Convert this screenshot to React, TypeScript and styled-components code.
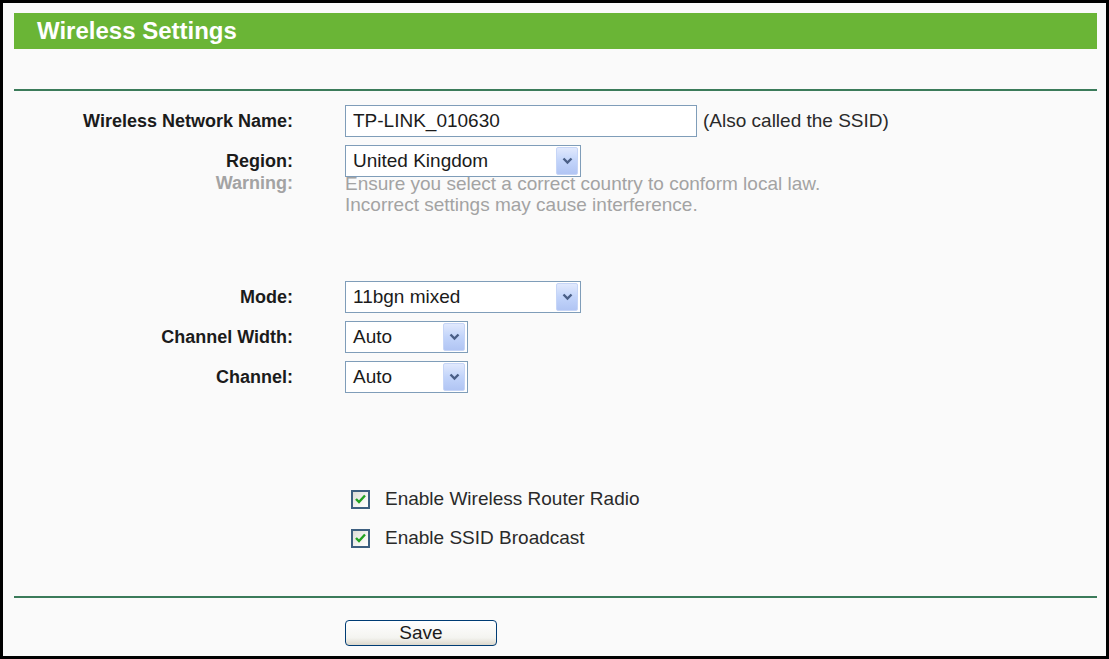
import React from "react";
import styled, { createGlobalStyle } from "styled-components";

const GlobalStyle = createGlobalStyle`
  html, body {
    margin: 0;
    padding: 0;
    background: #fafafa;
  }
  * {
    box-sizing: border-box;
  }
`;

const Frame = styled.div`
  width: 1109px;
  height: 659px;
  border: 3px solid #000;
  background: #fafafa;
  padding: 10px 9px 0 11px;
  font-family: "Liberation Sans", Arial, sans-serif;
  color: #1b1b1b;
  overflow: hidden;
`;

const Header = styled.div`
  height: 36px;
  background: #6ab536;
  color: #fff;
  font-size: 24px;
  font-weight: bold;
  padding-left: 23px;
  display: flex;
  align-items: center;
`;

const Divider = styled.div<{ $top: number }>`
  margin-top: ${({ $top }) => $top}px;
  height: 2px;
  background: #3b7b5a;
`;

const Row = styled.div<{ $top: number; $start?: boolean }>`
  display: grid;
  grid-template-columns: 279px 1fr;
  column-gap: 52px;
  align-items: ${({ $start }) => ($start ? "start" : "center")};
  margin-top: ${({ $top }) => $top}px;
`;

const Label = styled.div<{ $muted?: boolean }>`
  text-align: right;
  font-size: 18px;
  font-weight: bold;
  line-height: 21px;
  color: ${({ $muted }) => ($muted ? "#a3a3a3" : "#1b1b1b")};
`;

const Cell = styled.div`
  display: flex;
  align-items: center;
  gap: 6px;
  font-size: 19px;
`;

const TextInput = styled.input`
  width: 352px;
  height: 32px;
  border: 1px solid #7f9db9;
  background: #fff;
  padding: 0 7px;
  font-family: inherit;
  font-size: 19px;
  color: #1b1b1b;
  outline: none;
`;

const Note = styled.span`
  font-size: 19px;
  color: #2a2a2a;
`;

const WarningText = styled.div`
  font-size: 19px;
  line-height: 21px;
  color: #a3a3a3;
`;

const SelectBox = styled.div<{ $width: number }>`
  width: ${({ $width }) => $width}px;
  height: 32px;
  border: 1px solid #7f9db9;
  background: #fff;
  display: flex;
  align-items: center;
  justify-content: space-between;
  padding: 1px 2px 1px 7px;
  font-size: 19px;
  color: #1b1b1b;
`;

const ArrowButton = styled.span`
  width: 22px;
  height: 100%;
  border: 1px solid #c6d5f7;
  border-radius: 2px;
  background: linear-gradient(180deg, #e1e9fd 0%, #c2d4fa 50%, #b1c5f4 100%);
  display: flex;
  align-items: center;
  justify-content: center;
`;

const CheckRow = styled.label`
  display: flex;
  align-items: center;
  gap: 15px;
  margin-left: 6px;
  height: 20px;
  font-size: 19px;
  color: #2a2a2a;
`;

const CheckBox = styled.span`
  width: 19px;
  height: 19px;
  border: 2px solid #3d5f80;
  background: linear-gradient(135deg, #dcdcd7 0%, #f4f4f1 60%, #fff 100%);
  display: flex;
  align-items: center;
  justify-content: center;
`;

const SaveButton = styled.button`
  width: 152px;
  height: 26px;
  border: 1px solid #003c74;
  border-radius: 4px;
  background: linear-gradient(180deg, #ffffff 0%, #f4f4f0 70%, #dcd8cc 100%);
  font-family: inherit;
  font-size: 19px;
  color: #1b1b1b;
  padding: 0;
`;

const Select = ({ value, width }: { value: string; width: number }) => (
  <SelectBox $width={width}>
    <span>{value}</span>
    <ArrowButton>
      <svg width="11" height="8" viewBox="0 0 11 8">
        <path d="M1.5 1.5 L5.5 5.5 L9.5 1.5" fill="none" stroke="#4a5f87" strokeWidth="2.4" />
      </svg>
    </ArrowButton>
  </SelectBox>
);

const Check = ({ children }: { children: React.ReactNode }) => (
  <CheckRow>
    <CheckBox>
      <svg width="11" height="10" viewBox="0 0 11 10">
        <path d="M1 5 L4 8 L10 1.5" fill="none" stroke="#21a121" strokeWidth="2.4" />
      </svg>
    </CheckBox>
    {children}
  </CheckRow>
);

export default function App() {
  return (
    <>
      <GlobalStyle />
      <Frame>
        <Header>Wireless Settings</Header>
        <Divider $top={40} />

        <Row $top={14}>
          <Label>Wireless Network Name:</Label>
          <Cell>
            <TextInput defaultValue="TP-LINK_010630" />
            <Note>(Also called the SSID)</Note>
          </Cell>
        </Row>

        <Row $top={8}>
          <Label>Region:</Label>
          <Cell>
            <Select value="United Kingdom" width={236} />
          </Cell>
        </Row>

        <Row $top={-4} $start>
          <Label $muted>Warning:</Label>
          <WarningText>
            Ensure you select a correct country to conform local law.
            <br />
            Incorrect settings may cause interference.
          </WarningText>
        </Row>

        <Row $top={66}>
          <Label>Mode:</Label>
          <Cell>
            <Select value="11bgn mixed" width={236} />
          </Cell>
        </Row>

        <Row $top={8}>
          <Label>Channel Width:</Label>
          <Cell>
            <Select value="Auto" width={123} />
          </Cell>
        </Row>

        <Row $top={8}>
          <Label>Channel:</Label>
          <Cell>
            <Select value="Auto" width={123} />
          </Cell>
        </Row>

        <Row $top={96}>
          <span />
          <Check>Enable Wireless Router Radio</Check>
        </Row>

        <Row $top={19}>
          <span />
          <Check>Enable SSID Broadcast</Check>
        </Row>

        <Divider $top={48} />

        <Row $top={22}>
          <span />
          <div>
            <SaveButton>Save</SaveButton>
          </div>
        </Row>
      </Frame>
    </>
  );
}
